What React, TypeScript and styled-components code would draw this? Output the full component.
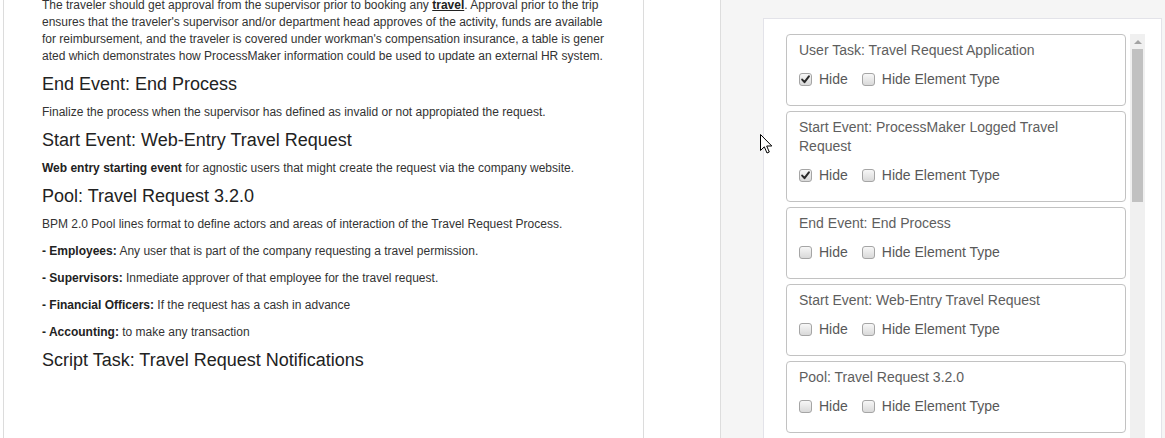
import React from "react";
import styled, { createGlobalStyle } from "styled-components";

const GlobalStyle = createGlobalStyle`
  html, body { margin: 0; padding: 0; background: #ffffff; }
  body { font-family: "Liberation Sans", Arial, Helvetica, sans-serif; overflow: hidden; }
  * { box-sizing: border-box; }
`;

const Page = styled.div`
  position: relative;
  display: flex;
  width: 1165px;
  height: 438px;
  overflow: hidden;
`;

const ContentColumn = styled.div`
  flex: none;
  width: 720px;
  height: 100%;
  padding-left: 3px;
  display: flex;
`;

const Article = styled.article`
  width: 641px;
  height: 100%;
  border-left: 1px solid #dcdcdc;
  border-right: 1px solid #dcdcdc;
  padding: 0 20px 0 38px;
  color: #333333;
  font-size: 12px;
  line-height: 17px;
  overflow: hidden;
`;

const ArticleBody = styled.div`
  margin-top: -3.5px;
`;

const Para = styled.p`
  margin: 0 0 10px;
  white-space: nowrap;
`;

const Heading = styled.h4`
  margin: 10px 0;
  font-size: 18px;
  font-weight: 400;
  line-height: 19px;
  color: #222222;
`;

const Strong = styled.b`
  font-weight: 700;
  color: #222222;
`;

const TextLink = styled.a`
  font-weight: 700;
  color: #222222;
  text-decoration: underline;
`;

const Sidebar = styled.aside`
  flex: 1;
  height: 100%;
  background: #f5f5f5;
  border-left: 1px solid #dddddd;
  padding: 18px 3px 0 42px;
  display: flex;
`;

const Panel = styled.section`
  width: 399px;
  height: 440px;
  background: #ffffff;
  border: 1px solid #e3e3e9;
  border-bottom: none;
  padding: 15px 15px 0 22px;
  display: flex;
  align-items: flex-start;
  gap: 4px;
`;

const CardList = styled.div`
  width: 340px;
  flex: none;
  display: flex;
  flex-direction: column;
  gap: 5px;
`;

const Card = styled.div`
  border: 1px solid #c2c2c2;
  border-radius: 4px;
  padding: 6px 12px 16px;
`;

const CardTitle = styled.div`
  font-size: 14px;
  line-height: 19px;
  color: #5e5e5e;
`;

const OptionRow = styled.div`
  display: flex;
  align-items: center;
  height: 20px;
  margin-top: 9px;
  font-size: 14px;
  line-height: 20px;
  color: #585858;
`;

const Option = styled.label`
  display: flex;
  align-items: center;
  gap: 7px;
  margin-right: 14px;
`;

const Box = styled.span`
  width: 13px;
  height: 13px;
  border: 1px solid #a5a5a5;
  border-radius: 3px;
  background: linear-gradient(#f7f7f7, #d9d9d9);
  display: flex;
  align-items: center;
  justify-content: center;
`;

const ScrollTrack = styled.div`
  width: 15px;
  height: 410px;
  flex: none;
  background: #f0f0f0;
  display: flex;
  flex-direction: column;
  align-items: center;
`;

const ScrollArrow = styled.div`
  width: 0;
  height: 0;
  margin-top: 6px;
  border-left: 4px solid transparent;
  border-right: 4px solid transparent;
  border-bottom: 4px solid #a3a3a3;
`;

const ScrollThumb = styled.div`
  width: 11px;
  height: 153px;
  margin-top: 5px;
  background: #c1c1c1;
`;

const Pointer = styled.svg`
  position: absolute;
  left: 760px;
  top: 134px;
  pointer-events: none;
`;

type CheckProps = { checked?: boolean; label: string };

const Check = ({ checked, label }: CheckProps) => (
  <Option>
    <Box>
      {checked && (
        <svg width="9" height="9" viewBox="0 0 9 9">
          <path d="M1.2 4.6 L3.5 7.2 L7.9 1.4" fill="none" stroke="#2a2a2a" strokeWidth="2" strokeLinecap="round" strokeLinejoin="round" />
        </svg>
      )}
    </Box>
    <span>{label}</span>
  </Option>
);

const elements = [
  { title: "User Task: Travel Request Application", hide: true },
  { title: "Start Event: ProcessMaker Logged Travel Request", hide: true },
  { title: "End Event: End Process", hide: false },
  { title: "Start Event: Web-Entry Travel Request", hide: false },
  { title: "Pool: Travel Request 3.2.0", hide: false },
];

export default function App() {
  return (
    <>
      <GlobalStyle />
      <Page>
        <ContentColumn>
          <Article>
            <ArticleBody>
              <Para>
                The traveler should get approval from the supervisor prior to booking any <TextLink>travel</TextLink>. Approval prior to the trip
                <br />
                ensures that the traveler's supervisor and/or department head approves of the activity, funds are available
                <br />
                for reimbursement, and the traveler is covered under workman's compensation insurance, a table is gener
                <br />
                ated which demonstrates how ProcessMaker information could be used to update an external HR system.
              </Para>
              <Heading>End Event: End Process</Heading>
              <Para>Finalize the process when the supervisor has defined as invalid or not appropiated the request.</Para>
              <Heading>Start Event: Web-Entry Travel Request</Heading>
              <Para>
                <Strong>Web entry starting event</Strong> for agnostic users that might create the request via the company website.
              </Para>
              <Heading>Pool: Travel Request 3.2.0</Heading>
              <Para>BPM 2.0 Pool lines format to define actors and areas of interaction of the Travel Request Process.</Para>
              <Para>
                <Strong>- Employees:</Strong> Any user that is part of the company requesting a travel permission.
              </Para>
              <Para>
                <Strong>- Supervisors:</Strong> Inmediate approver of that employee for the travel request.
              </Para>
              <Para>
                <Strong>- Financial Officers:</Strong> If the request has a cash in advance
              </Para>
              <Para>
                <Strong>- Accounting:</Strong> to make any transaction
              </Para>
              <Heading>Script Task: Travel Request Notifications</Heading>
            </ArticleBody>
          </Article>
        </ContentColumn>
        <Sidebar>
          <Panel>
            <CardList>
              {elements.map((el) => (
                <Card key={el.title}>
                  <CardTitle>{el.title}</CardTitle>
                  <OptionRow>
                    <Check checked={el.hide} label="Hide" />
                    <Check label="Hide Element Type" />
                  </OptionRow>
                </Card>
              ))}
            </CardList>
            <ScrollTrack>
              <ScrollArrow />
              <ScrollThumb />
            </ScrollTrack>
          </Panel>
        </Sidebar>
        <Pointer width="14" height="21" viewBox="0 0 14 21">
          <path d="M0.5 0.5 L0.5 16.5 L4.3 12.8 L7 19 L9.3 18 L6.7 12 L11.8 12 Z" fill="#ffffff" stroke="#000000" strokeWidth="1" strokeLinejoin="miter" />
        </Pointer>
      </Page>
    </>
  );
}
